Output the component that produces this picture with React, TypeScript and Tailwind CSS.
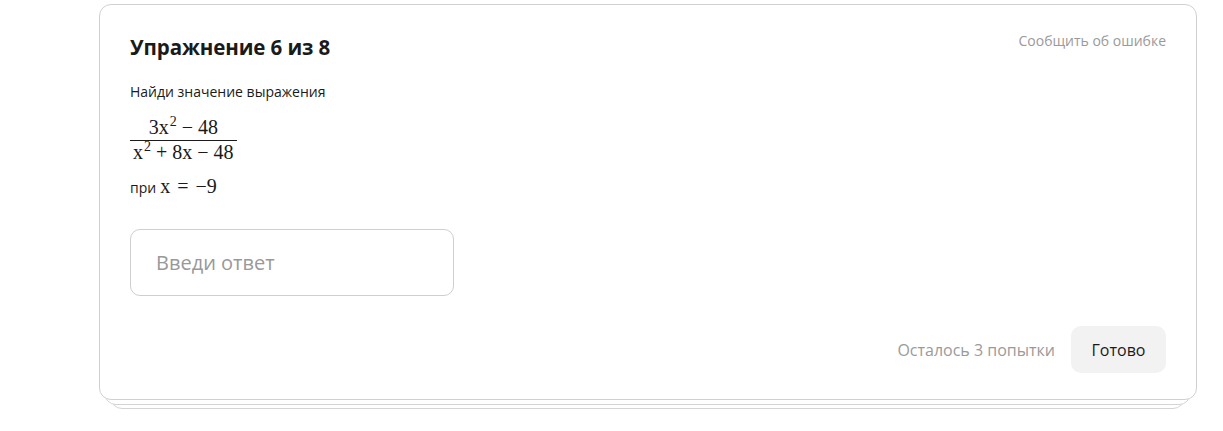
import React from "react";

function Sup({ children }: { children: React.ReactNode }) {
  return <sup className="text-[14px] top-[-0.55em] ml-[1px]">{children}</sup>;
}

function Op({ children, w = "mx-[5px]" }: { children: React.ReactNode; w?: string }) {
  return <span className={w}>{children}</span>;
}

export default function App() {
  return (
    <div className="w-[1223px] h-[431px] bg-white relative font-['Open_Sans','Noto_Sans',sans-serif]">
      <div className="absolute left-[110px] top-[20px] w-[1075px] h-[389px] rounded-[12px] border border-[#d4d4d4] bg-white" />
      <div className="absolute left-[104px] top-[12px] w-[1087px] h-[393px] rounded-[12px] border border-[#d4d4d4] bg-white" />
      <div className="absolute left-[99px] top-[4px] w-[1098px] h-[396px] rounded-[12px] border border-[#d0d0d0] bg-white flex flex-col px-[30px] pt-[28px] pb-[26px]">
        <div className="flex justify-between items-start">
          <h1 className="text-[20.5px] leading-[28px] font-bold text-[#1a1a1a] tracking-[-0.1px]">
            Упражнение 6 из 8
          </h1>
          <span className="text-[14px] leading-[20px] text-[#9a9a9a] mt-[-2px]">Сообщить об ошибке</span>
        </div>
        <p className="mt-[21px] text-[14px] leading-[20px] text-[#1a1a1a]">Найди значение выражения</p>
        <div className="mt-[14px] inline-flex flex-col items-center self-start font-['Liberation_Serif',serif] text-[20px] text-[#1a1a1a]">
          <div className="leading-[22px] px-[2px] whitespace-nowrap">
            3x<Sup>2</Sup><Op>−</Op>48
          </div>
          <div className="w-full h-[1px] bg-[#1a1a1a] mt-[2px] mb-[0px]" />
          <div className="leading-[22px] px-[3px] whitespace-nowrap">
            x<Sup>2</Sup><Op>+</Op>8x<Op>−</Op>48
          </div>
        </div>
        <p className="mt-[11px] text-[14px] leading-[24px] text-[#1a1a1a] flex items-baseline gap-[4px]">
          при{" "}
          <span className="font-['Liberation_Serif',serif] text-[20px] whitespace-nowrap">
            x<Op w="mx-[7px]">=</Op>−9
          </span>
        </p>
        <div className="mt-[29px] w-[324px] h-[67px] rounded-[10px] border border-[#cfcfcf] flex items-center px-[25px]">
          <span className="text-[20px] text-[#999999]">Введи ответ</span>
        </div>
        <div className="mt-auto flex items-center justify-end gap-[16px]">
          <span className="text-[16px] text-[#9a9a9a]">Осталось 3 попытки</span>
          <button className="w-[95px] h-[47px] rounded-[10px] bg-[#f2f2f2] text-[16px] text-[#1a1a1a]">Готово</button>
        </div>
      </div>
    </div>
  );
}
